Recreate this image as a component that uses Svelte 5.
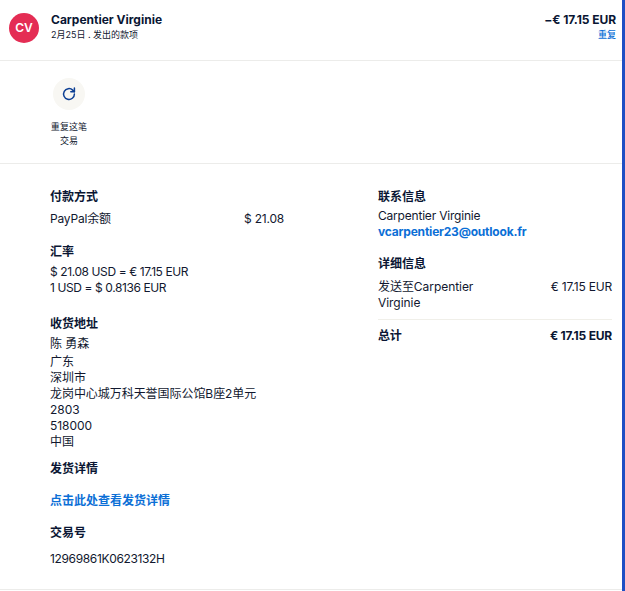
<script>
  const addressLines = ['广东', '深圳市', '龙岗中心城万科天誉国际公馆B座2单元', '2803', '518000', '中国'];
</script>

<div class="page">
  <header class="top">
    <div class="avatar">CV</div>
    <div class="who">
      <div class="name">Carpentier Virginie</div>
      <div class="sub">2月25日 . 发出的款项</div>
    </div>
    <div class="amount">
      <div class="total">−€ 17.15 EUR</div>
      <a class="repeat" href="#top">重复</a>
    </div>
  </header>

  <section class="actions">
    <div class="action">
      <div class="circle">
        <svg width="16" height="16" viewBox="0 0 16 16" fill="none" stroke="#0d3f94" stroke-width="1.5" stroke-linecap="round" stroke-linejoin="round">
          <path d="M13.4 8a5.4 5.4 0 1 1-1.7-3.9L13.4 5.7" />
          <path d="M13.4 2v3.7H9.8" />
        </svg>
      </div>
      <div class="label">重复这笔交易</div>
    </div>
  </section>

  <section class="details">
    <div class="left">
      <div class="block first">
        <h3>付款方式</h3>
        <div class="row pay"><span>PayPal余额</span><span>$ 21.08</span></div>
      </div>
      <div class="block rate">
        <h3>汇率</h3>
        <p>$ 21.08 USD = € 17.15 EUR</p>
        <p>1 USD = $ 0.8136 EUR</p>
      </div>
      <div class="block addr">
        <h3>收货地址</h3>
        <p class="person">陈 勇森</p>
        {#each addressLines as line}
          <p>{line}</p>
        {/each}
      </div>
      <div class="block ship">
        <h3>发货详情</h3>
        <a class="link" href="#top">点击此处查看发货详情</a>
      </div>
      <div class="block txn">
        <h3>交易号</h3>
        <p>12969861K0623132H</p>
      </div>
    </div>

    <div class="right">
      <div class="block first">
        <h3>联系信息</h3>
        <p class="contact">Carpentier Virginie</p>
        <a class="mail" href="#top">vcarpentier23@outlook.fr</a>
      </div>
      <div class="block info">
        <h3>详细信息</h3>
        <div class="row send"><span class="to">发送至Carpentier Virginie</span><span>€ 17.15 EUR</span></div>
      </div>
      <div class="row sum"><strong>总计</strong><strong>€ 17.15 EUR</strong></div>
    </div>
  </section>
</div>

<style>
  :global(body) {
    margin: 0;
    background: #fff;
  }
  .page {
    box-sizing: border-box;
    width: 625px;
    height: 591px;
    border-right: 3px solid #1f4fc4;
    font-family: Inter, "Noto Sans CJK SC", sans-serif;
    font-size: 12px;
    line-height: 16px;
    letter-spacing: -0.2px;
    color: #11182f;
    overflow: hidden;
  }
  .top {
    display: flex;
    align-items: flex-start;
    height: 61px;
    box-sizing: border-box;
    padding: 13px 6px 0 9px;
    border-bottom: 1px solid #ececea;
  }
  .avatar {
    width: 30px;
    height: 30px;
    border-radius: 50%;
    background: #e42d54;
    color: #fff;
    font-weight: 600;
    font-size: 12px;
    line-height: 30px;
    letter-spacing: 0;
    text-align: center;
  }
  .who {
    margin-left: 12px;
    flex: 1;
  }
  .name {
    font-weight: 700;
    font-size: 12px;
    line-height: 14px;
    letter-spacing: 0;
    color: #0a1633;
  }
  .sub {
    margin-top: 1px;
    font-size: 9px;
    line-height: 14px;
    letter-spacing: 0;
  }
  .amount {
    text-align: right;
  }
  .total {
    font-weight: 700;
    font-size: 12px;
    line-height: 14px;
    letter-spacing: -0.05px;
    color: #0a1633;
  }
  .repeat {
    display: block;
    margin-top: 1px;
    font-size: 9px;
    line-height: 14px;
    letter-spacing: 0;
    font-weight: 500;
    color: #0b6fd6;
    text-decoration: none;
  }
  .actions {
    height: 103px;
    box-sizing: border-box;
    padding: 17px 0 0 50px;
    border-bottom: 1px solid #ececea;
  }
  .action {
    width: 38px;
    display: flex;
    flex-direction: column;
    align-items: center;
  }
  .circle {
    width: 32px;
    height: 32px;
    border-radius: 50%;
    background: #f8f7f3;
    display: flex;
    align-items: center;
    justify-content: center;
  }
  .label {
    margin-top: 10px;
    font-size: 9px;
    line-height: 14px;
    letter-spacing: 0.1px;
    text-align: center;
  }
  .details {
    display: flex;
    box-sizing: border-box;
    height: 426px;
    padding-top: 25px;
    border-bottom: 1px solid #ececea;
  }
  .left {
    margin-left: 50px;
    width: 234px;
  }
  .right {
    margin-left: 94px;
    width: 234px;
  }
  h3 {
    margin: 0;
    font-size: 12px;
    line-height: 16px;
    font-weight: 700;
    letter-spacing: 0;
    color: #0a1633;
  }
  p {
    margin: 0;
  }
  .row {
    display: flex;
    justify-content: space-between;
  }
  .pay {
    margin-top: 6px;
  }
  .rate {
    margin-top: 17px;
  }
  .rate h3 {
    margin-bottom: 4px;
  }
  .rate p {
    letter-spacing: -0.4px;
  }
  .addr {
    margin-top: 20px;
  }
  .addr p {
    letter-spacing: -0.05px;
  }
  .person {
    margin-top: 4px;
    margin-bottom: 2px;
  }
  .ship {
    margin-top: 11px;
  }
  .link {
    display: block;
    margin-top: 16px;
    font-weight: 700;
    letter-spacing: 0;
    color: #0b6fd6;
    text-decoration: none;
  }
  .txn {
    margin-top: 16px;
  }
  .txn p {
    margin-top: 10px;
    letter-spacing: -0.35px;
  }
  .contact {
    margin-top: 3px;
  }
  .mail {
    display: block;
    font-weight: 700;
    color: #0b6fd6;
    text-decoration: none;
  }
  .info {
    margin-top: 16px;
  }
  .send {
    margin-top: 7px;
    padding-bottom: 8px;
    border-bottom: 1px solid #f0efe9;
  }
  .to {
    width: 110px;
    letter-spacing: -0.05px;
  }
  .sum {
    margin-top: 8px;
    color: #0a1633;
  }
</style>
